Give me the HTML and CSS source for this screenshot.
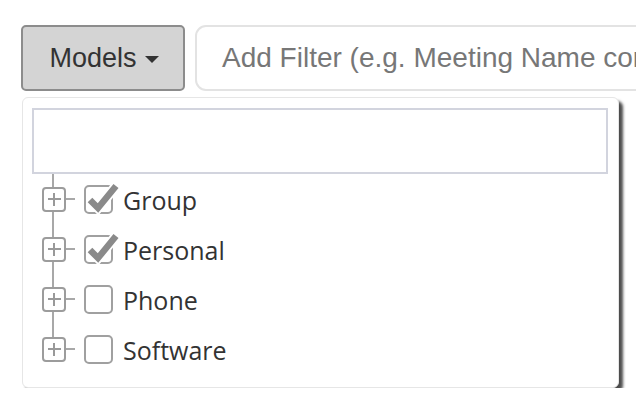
FILE: index.html
```html
<!DOCTYPE html>
<html>
<head>
<meta charset="utf-8">
<link rel="stylesheet" href="styles.css">
</head>
<body>
<div class="toolbar">
  <button class="models-btn">Models <span class="caret"></span></button>
  <div class="filter">Add Filter (e.g. Meeting Name contains Sales)</div>
</div>
<div class="dropdown">
  <div class="search"></div>
  <ul class="tree">
    <li class="node">
      <span class="expander"><span class="plus"></span></span>
      <span class="dash"></span>
      <span class="check checked"><svg viewBox="0 0 36 30" width="36" height="30"><polyline points="6,15 14,23 32,1" class="halo"/><polyline points="6,15 14,23 32,1" class="mark"/></svg></span>
      <span class="label">Group</span>
    </li>
    <li class="node">
      <span class="expander"><span class="plus"></span></span>
      <span class="dash"></span>
      <span class="check checked"><svg viewBox="0 0 36 30" width="36" height="30"><polyline points="6,15 14,23 32,1" class="halo"/><polyline points="6,15 14,23 32,1" class="mark"/></svg></span>
      <span class="label">Personal</span>
    </li>
    <li class="node">
      <span class="expander"><span class="plus"></span></span>
      <span class="dash"></span>
      <span class="check"></span>
      <span class="label">Phone</span>
    </li>
    <li class="node last">
      <span class="expander"><span class="plus"></span></span>
      <span class="dash"></span>
      <span class="check"></span>
      <span class="label">Software</span>
    </li>
  </ul>
</div>
</body>
</html>
```
FILE: styles.css
```css
html, body {
  margin: 0;
  padding: 0;
  background: #fff;
  overflow: hidden;
}
body {
  padding: 25px 0 0 21px;
  font-family: "Liberation Sans", Arial, sans-serif;
}
.toolbar {
  display: flex;
  gap: 10px;
  height: 66px;
  width: 800px;
}
.models-btn {
  box-sizing: border-box;
  flex: 0 0 164px;
  height: 66px;
  background: #d4d4d4;
  border: 2px solid #8c8c8c;
  border-radius: 5px;
  font-family: "Liberation Sans", Arial, sans-serif;
  font-size: 27px;
  color: #333;
  padding: 0 0 0 2px;
  display: flex;
  align-items: center;
  justify-content: center;
}
.caret {
  display: inline-block;
  width: 0;
  height: 0;
  border-left: 7px solid transparent;
  border-right: 7px solid transparent;
  border-top: 7px solid #333;
  margin-left: 8px;
  margin-top: 2px;
}
.filter {
  box-sizing: border-box;
  flex: 0 0 600px;
  height: 66px;
  border: 2px solid #e3e3e3;
  border-radius: 11px;
  font-size: 28px;
  color: #777;
  padding-left: 25px;
  display: flex;
  align-items: center;
  white-space: nowrap;
  overflow: hidden;
}
.dropdown {
  box-sizing: border-box;
  margin-top: 6px;
  margin-left: 1px;
  width: 597px;
  height: 291px;
  background: #fff;
  border: 1px solid #e6e6e6;
  border-radius: 6px;
  box-shadow: 4px 4px 3px rgba(0,0,0,0.7);
  padding: 10px 10px 0 9px;
}
.search {
  box-sizing: border-box;
  height: 66px;
  border: 2px solid #d2d4de;
  background: #fff;
}
.tree {
  list-style: none;
  margin: 0;
  padding: 0 0 0 10px;
}
.node {
  position: relative;
  height: 50px;
  display: flex;
  align-items: center;
  font-family: "Open Sans", "Noto Sans", sans-serif;
  font-size: 25px;
  color: #333;
}
.node::before {
  content: "";
  position: absolute;
  left: 10px;
  top: 0;
  bottom: 0;
  width: 2px;
  background: #a8a8a8;
}
.node.last::before {
  bottom: 25px;
}
.expander {
  position: relative;
  box-sizing: border-box;
  width: 24px;
  height: 25px;
  border: 2px solid #9c9c9c;
  border-radius: 4px;
  background: #fff;
  z-index: 1;
  display: flex;
  align-items: center;
  justify-content: center;
}
.plus {
  position: relative;
  width: 13px;
  height: 2px;
  background: #999;
}
.plus::after {
  content: "";
  position: absolute;
  left: 5.5px;
  top: -5.5px;
  width: 2px;
  height: 13px;
  background: #999;
}
.dash {
  width: 9px;
  height: 2px;
  background: #a8a8a8;
  margin-right: 9px;
}
.check {
  position: relative;
  box-sizing: border-box;
  width: 29px;
  height: 29px;
  border: 2px solid #a0a0a0;
  border-radius: 5px;
  margin-right: 10px;
}
.check svg {
  position: absolute;
  left: -2px;
  top: -2px;
  overflow: visible;
}
.check .halo {
  fill: none;
  stroke: #fff;
  stroke-width: 10;
}
.check .mark {
  fill: none;
  stroke: #8a8a8a;
  stroke-width: 6.5;
}
.label {
  line-height: 1;
  margin-top: 2px;
}
```
